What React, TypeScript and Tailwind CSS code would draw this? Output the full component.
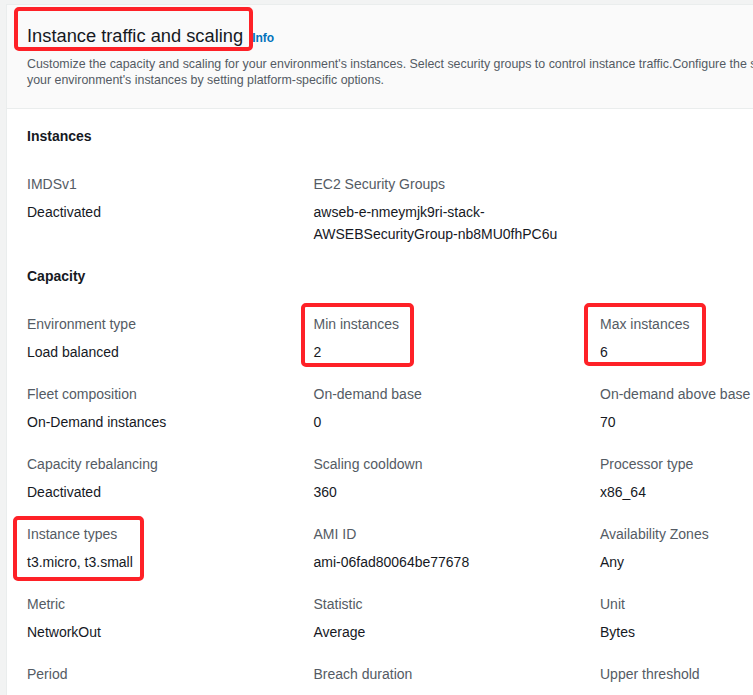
const instanceItems = [
  { label: "IMDSv1", value: "Deactivated" },
  { label: "EC2 Security Groups", value: ["awseb-e-nmeymjk9ri-stack-", "AWSEBSecurityGroup-nb8MU0fhPC6u"] },
];

const capacityItems = [
  { label: "Environment type", value: "Load balanced" },
  { label: "Min instances", value: "2" },
  { label: "Max instances", value: "6" },
  { label: "Fleet composition", value: "On-Demand instances" },
  { label: "On-demand base", value: "0" },
  { label: "On-demand above base", value: "70" },
  { label: "Capacity rebalancing", value: "Deactivated" },
  { label: "Scaling cooldown", value: "360" },
  { label: "Processor type", value: "x86_64" },
  { label: "Instance types", value: "t3.micro, t3.small" },
  { label: "AMI ID", value: "ami-06fad80064be77678" },
  { label: "Availability Zones", value: "Any" },
  { label: "Metric", value: "NetworkOut" },
  { label: "Statistic", value: "Average" },
  { label: "Unit", value: "Bytes" },
  { label: "Period", value: "5" },
  { label: "Breach duration", value: "5" },
  { label: "Upper threshold", value: "6000000" },
];

type Item = { label: string; value: string | string[] };

const KeyValueGrid = ({ items }: { items: Item[] }) => (
  <div className="grid grid-cols-[266.5px_266.5px_266.5px] gap-x-5 gap-y-5">
    {items.map((item) => (
      <div key={item.label}>
        <div className="text-[14px] leading-[22px] text-[#545b64]">{item.label}</div>
        <div className="mt-[6px] text-[14px] leading-[22px] text-[#16191f]">
          {Array.isArray(item.value)
            ? item.value.map((line) => <div key={line}>{line}</div>)
            : item.value}
        </div>
      </div>
    ))}
  </div>
);

// red annotation boxes drawn over the screenshot
const Highlight = ({ className }: { className: string }) => (
  <div className={`pointer-events-none absolute rounded-[5px] border-4 border-[#fe2127] ${className}`} />
);

export default function App() {
  return (
    <div
      className="relative h-[695px] w-[753px] overflow-hidden bg-[#f2f3f3] pl-[6px] pt-[4px]"
      style={{ fontFamily: '"Liberation Sans", Arial, sans-serif' }}
    >
      <div className="w-[1000px] border border-[#eaeded] bg-white">
        {/* header */}
        <div className="border-b border-[#eaeded] bg-[#fafafa] px-5 pb-5 pt-[17px]">
          <div className="flex items-baseline gap-[9px]">
            <h2 className="text-[18.3px] leading-[28px] text-[#16191f]">Instance traffic and scaling</h2>
            <a className="text-[12px] font-bold text-[#0073bb]">Info</a>
          </div>
          <p className="mt-[6px] text-[12.4px] leading-[16px] text-[#545b64]">
            Customize the capacity and scaling for your environment's instances. Select security groups to control
            instance traffic.Configure the scaling triggers for
            <br />
            your environment's instances by setting platform-specific options.
          </p>
        </div>

        {/* body */}
        <div className="px-5 pt-4">
          <h3 className="mb-[26px] text-[14px] font-bold leading-[22px] text-[#16191f]">Instances</h3>
          <KeyValueGrid items={instanceItems} />

          <h3 className="mb-[26px] mt-5 text-[14px] font-bold leading-[22px] text-[#16191f]">Capacity</h3>
          <KeyValueGrid items={capacityItems} />
        </div>
      </div>

      <Highlight className="left-[14px] top-[7px] h-[44px] w-[239px]" />
      <Highlight className="left-[301px] top-[303px] h-[64px] w-[113px]" />
      <Highlight className="left-[584px] top-[303px] h-[63px] w-[122px]" />
      <Highlight className="left-[13px] top-[516px] h-[65px] w-[131px]" />
    </div>
  );
}
